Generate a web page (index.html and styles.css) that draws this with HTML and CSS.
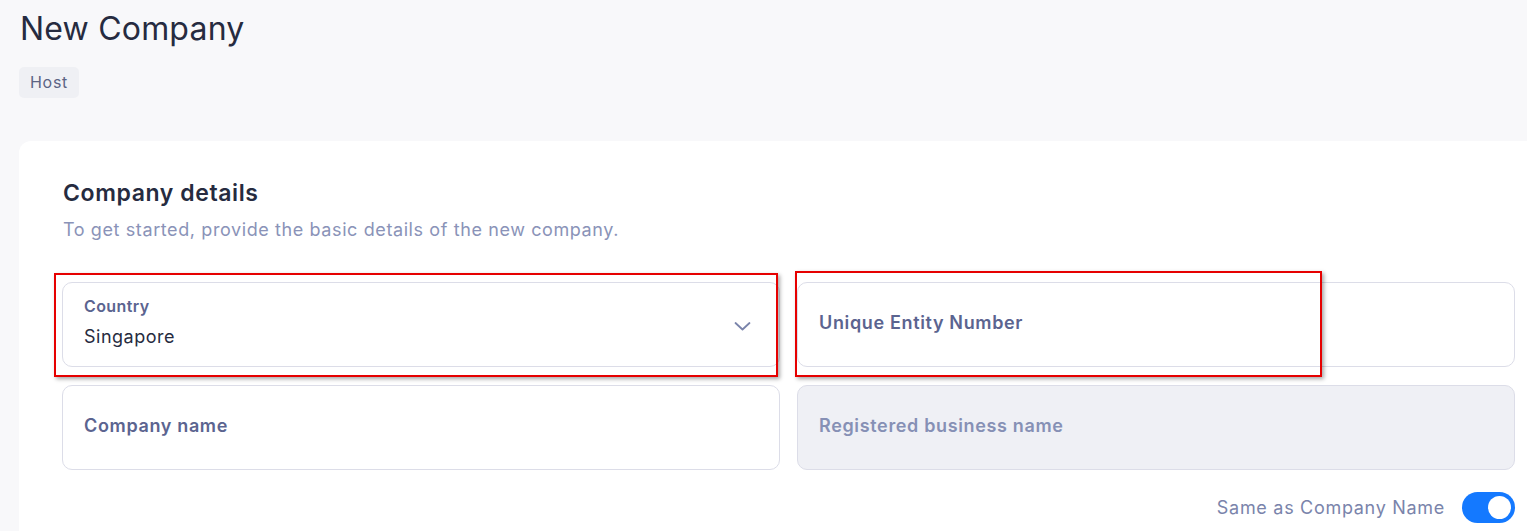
FILE: index.html
```html
<!DOCTYPE html>
<html>
<head>
<meta charset="utf-8">
<link rel="stylesheet" href="styles.css">
</head>
<body>
<div class="page">
  <h1 class="title">New Company</h1>
  <span class="tag">Host</span>
  <section class="card">
    <h2 class="card-title">Company details</h2>
    <p class="card-sub">To get started, provide the basic details of the new company.</p>
    <div class="grid">
      <div class="field select">
        <div class="field-body">
          <div class="label-small">Country</div>
          <div class="value">Singapore</div>
        </div>
        <svg class="chev" width="17" height="12" viewBox="0 0 17 12"><path d="M1.5 3 L8.5 9.5 L15.5 3" fill="none" stroke="#7a84ab" stroke-width="1.8" stroke-linecap="round" stroke-linejoin="round"/></svg>
      </div>
      <div class="field">
        <div class="label-big">Unique Entity Number</div>
      </div>
      <div class="field">
        <div class="label-big">Company name</div>
      </div>
      <div class="field disabled">
        <div class="label-big">Registered business name</div>
      </div>
    </div>
    <div class="toggle-row">
      <span class="toggle-label">Same as Company Name</span>
      <span class="toggle"><span class="knob"></span></span>
    </div>
  </section>
  <div class="mark mark1"></div>
  <div class="mark mark2"></div>
</div>
</body>
</html>
```

FILE: styles.css
```css
* { box-sizing: border-box; }
html, body { margin: 0; padding: 0; }
body {
  background: #f8f8fa;
  font-family: Inter, "Noto Sans", sans-serif;
  overflow: hidden;
  width: 1527px;
  height: 531px;
}
.page {
  position: relative;
  padding: 9px 0 0 19px;
}
.title {
  margin: 0 0 0 1px;
  font-size: 32px;
  line-height: 40px;
  font-weight: 400;
  color: #262b40;
  letter-spacing: 0.2px;
}
.tag {
  display: inline-block;
  margin-top: 18px;
  background: #eff0f4;
  border-radius: 5px;
  padding: 0 11px;
  height: 31px;
  line-height: 31px;
  font-size: 16px;
  color: #5c6484;
  letter-spacing: 0.7px;
}
.card {
  margin-top: 43px;
  width: 1539px;
  background: #fff;
  border-radius: 12px;
  padding: 37px 43px 20px 43px;
}
.card-title {
  margin: 0 0 0 1px;
  font-size: 23px;
  line-height: 30px;
  font-weight: 600;
  color: #262b40;
  letter-spacing: 0.6px;
}
.card-sub {
  margin: 10px 0 0 1px;
  font-size: 18px;
  line-height: 24px;
  color: #8a93b8;
  letter-spacing: 0.6px;
}
.grid {
  margin-top: 40px;
  display: grid;
  grid-template-columns: 718px 718px;
  column-gap: 17px;
  row-gap: 18px;
}
.field {
  height: 85px;
  border: 1px solid #dcdde8;
  border-radius: 10px;
  padding: 0 21px;
  display: flex;
  align-items: center;
  background: #fff;
}
.field.disabled { background: #eff0f5; }
.field.select { justify-content: space-between; padding-right: 28px; }
.label-small {
  font-size: 16px;
  font-weight: 600;
  color: #5b6490;
  line-height: 20px;
  margin-top: -4px;
  letter-spacing: 0.4px;
}
.value {
  font-size: 18px;
  color: #262b40;
  line-height: 24px;
  margin-top: 9px;
  letter-spacing: 0.5px;
}
.label-big {
  font-size: 18px;
  font-weight: 600;
  color: #5b6490;
  letter-spacing: 0.65px;
  margin-top: -4px;
}
.disabled .label-big { color: #8690b5; }
.chev { margin-top: 2px; }
.toggle-row {
  margin-top: 22px;
  display: flex;
  justify-content: flex-end;
  align-items: center;
  gap: 17px;
  width: 1453px;
}
.toggle-label {
  font-size: 18px;
  color: #7a84ab;
  letter-spacing: 0.7px;
}
.toggle {
  position: relative;
  width: 53px;
  height: 31px;
  border-radius: 16px;
  background: #1479ff;
}
.knob {
  position: absolute;
  right: 4px;
  top: 4px;
  width: 23px;
  height: 23px;
  border-radius: 50%;
  background: #fff;
}
.mark {
  position: absolute;
  border: 2px solid #e60000;
  box-shadow: 2px 2px 4px rgba(0,0,0,0.35);
  pointer-events: none;
}
.mark1 { left: 54px; top: 273px; width: 724px; height: 104px; }
.mark2 { left: 795px; top: 271px; width: 527px; height: 106px; }
```
